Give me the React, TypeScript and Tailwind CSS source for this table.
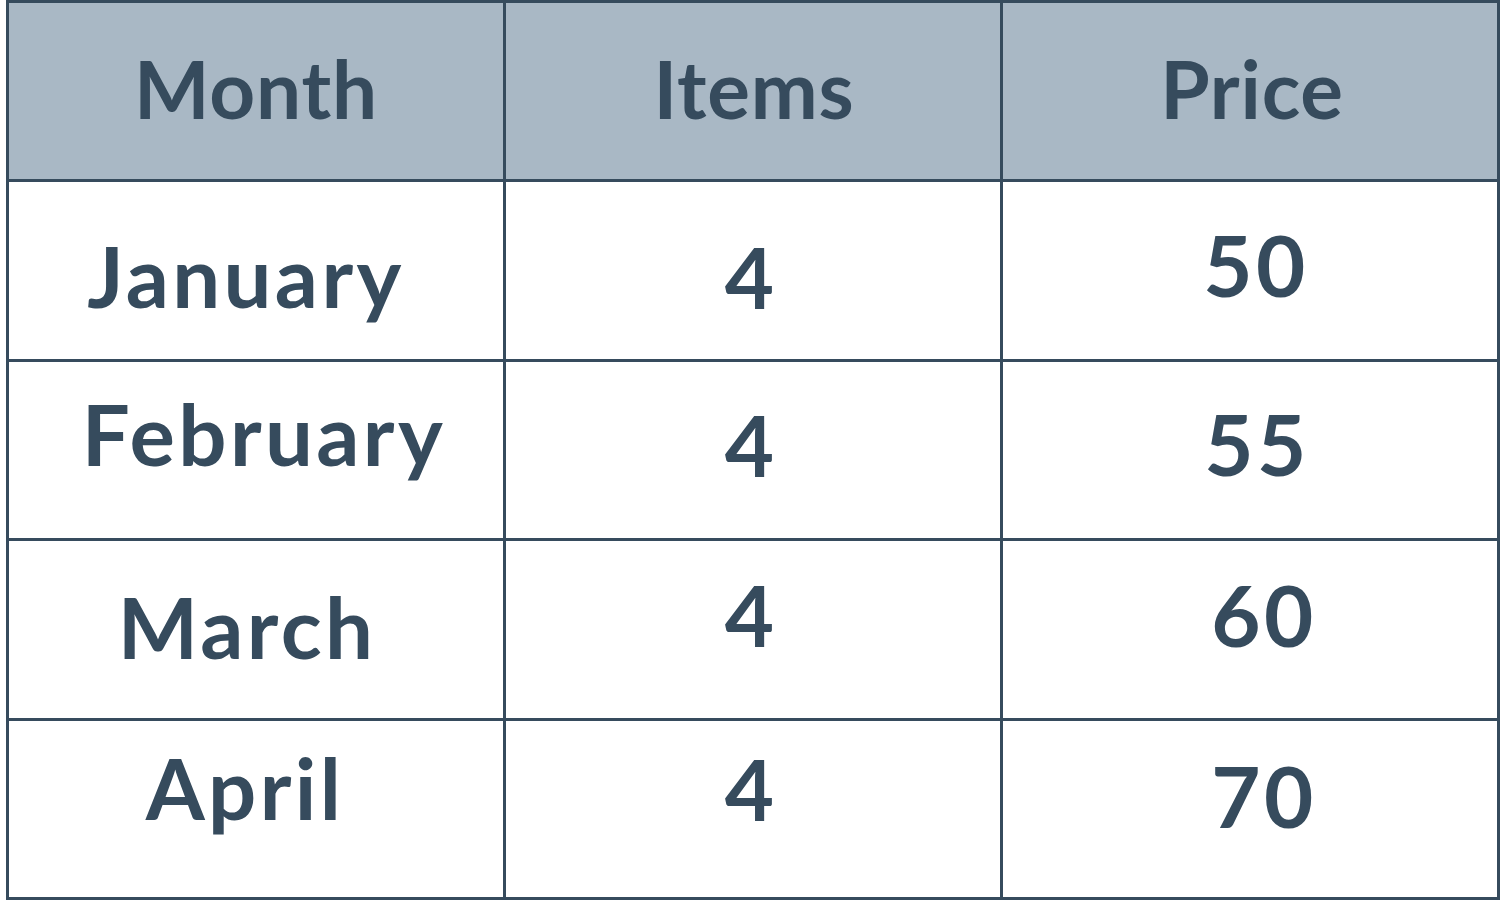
// each cell carries a small nudge so the text sits where the original chart put it
const header = [
  { label: 'Month', nudge: '-translate-y-[3px]' },
  { label: 'Items', nudge: '-translate-y-[3px] translate-x-[1px]' },
  { label: 'Price', nudge: '-translate-y-[3px] translate-x-[2px]' },
]

const rows = [
  [
    { text: 'January', nudge: 'translate-y-[5px] -translate-x-[10px]' },
    { text: '4', nudge: 'translate-y-[6px] -translate-x-[2px]' },
    { text: '50', nudge: '-translate-y-[6px] translate-x-[6px]' },
  ],
  [
    { text: 'February', nudge: '-translate-y-[16px] translate-x-[8px]' },
    { text: '4', nudge: '-translate-y-[5px] -translate-x-[2px]' },
    { text: '55', nudge: '-translate-y-[6px] translate-x-[7px]' },
  ],
  [
    { text: 'March', nudge: '-translate-y-[3px] -translate-x-[9px]' },
    { text: '4', nudge: '-translate-y-[15px] -translate-x-[2px]' },
    { text: '60', nudge: '-translate-y-[15px] translate-x-[14px]' },
  ],
  [
    { text: 'April', nudge: '-translate-y-[21px] -translate-x-[11px]' },
    { text: '4', nudge: '-translate-y-[20px] -translate-x-[2px]' },
    { text: '70', nudge: '-translate-y-[13px] translate-x-[14px]' },
  ],
]

export default function App() {
  return (
    <div
      className="w-[1500px] h-[900px] bg-white pl-[6px]"
      style={{ fontFamily: 'Lato, "Open Sans", sans-serif' }}
    >
      <div className="grid grid-cols-3 grid-rows-5 gap-[3px] p-[3px] h-full bg-[#364b5d] text-[#364b5d] font-bold leading-none">
        {header.map((h) => (
          <div key={h.label} className="bg-[#a9b8c5] flex items-center justify-center text-[80px] tracking-[0.01em]">
            <span className={h.nudge}>{h.label}</span>
          </div>
        ))}
        {rows.map((row, i) =>
          row.map((cell, j) => (
            <div key={`${i}-${j}`} className="bg-white flex items-center justify-center text-[85px] tracking-[0.04em]">
              <span className={cell.nudge}>{cell.text}</span>
            </div>
          ))
        )}
      </div>
    </div>
  )
}
